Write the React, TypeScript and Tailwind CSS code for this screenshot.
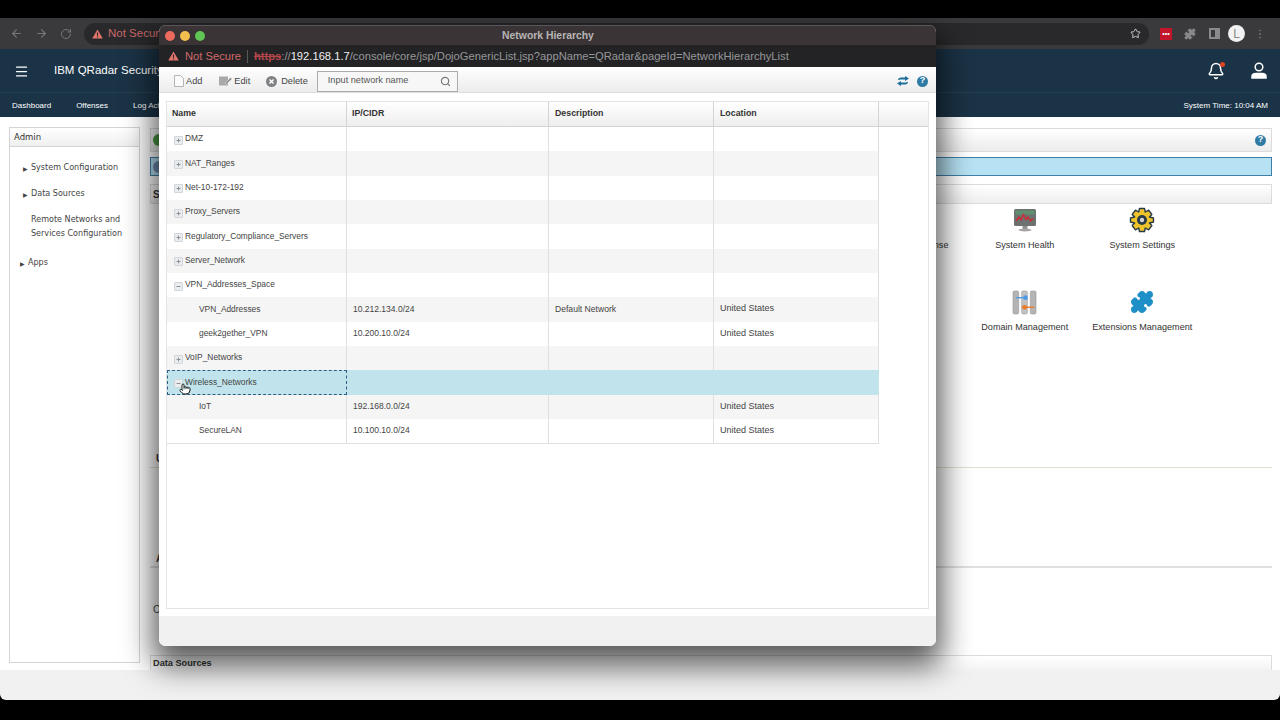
import React from 'react';
import { ArrowLeft, ArrowRight, RotateCw, Star, Puzzle, Menu, Bell, Search, Pointer, MoreVertical } from 'lucide-react';

interface NetRow {
  name: string;
  ip?: string;
  desc?: string;
  loc?: string;
  state?: 'plus' | 'minus';
  selected?: boolean;
}

const ROWS: NetRow[] = [
  { name: 'DMZ', state: 'plus' },
  { name: 'NAT_Ranges', state: 'plus' },
  { name: 'Net-10-172-192', state: 'plus' },
  { name: 'Proxy_Servers', state: 'plus' },
  { name: 'Regulatory_Compliance_Servers', state: 'plus' },
  { name: 'Server_Network', state: 'plus' },
  { name: 'VPN_Addresses_Space', state: 'minus' },
  { name: 'VPN_Addresses', ip: '10.212.134.0/24', desc: 'Default Network', loc: 'United States' },
  { name: 'geek2gether_VPN', ip: '10.200.10.0/24', loc: 'United States' },
  { name: 'VoIP_Networks', state: 'plus' },
  { name: 'Wireless_Networks', state: 'minus', selected: true },
  { name: 'IoT', ip: '192.168.0.0/24', loc: 'United States' },
  { name: 'SecureLAN', ip: '10.100.10.0/24', loc: 'United States' },
];

function Warning({ className }: { className: string }) {
  return (
    <svg viewBox="0 0 12 11" className={className}>
      <path d="M6 0.5 L11.8 10.5 H0.2 Z" fill="#e2746c" />
      <rect x="5.4" y="3.8" width="1.2" height="3.6" fill="#2a2729" />
      <rect x="5.4" y="8.1" width="1.2" height="1.2" fill="#2a2729" />
    </svg>
  );
}

function HelpDot({ className }: { className: string }) {
  return (
    <span className={`flex items-center justify-center rounded-full bg-[#2f7ba6] text-[9px] font-bold text-white ${className}`}>?</span>
  );
}

function Toggle({ state }: { state: 'plus' | 'minus' }) {
  return (
    <span className="mt-[2px] mr-[2px] flex h-[9px] w-[9px] shrink-0 items-center justify-center rounded-[1px] border border-[#d2d6da] bg-[#e9edf0]">
      <svg viewBox="0 0 7 7" className="h-[7px] w-[7px]">
        <rect x="1.5" y="3" width="4" height="1" fill="#8c9196" />
        {state === 'plus' && <rect x="3" y="1.5" width="1" height="4" fill="#8c9196" />}
      </svg>
    </span>
  );
}

function HealthIcon() {
  return (
    <svg viewBox="0 0 24 24" className="h-[24px] w-[24px]">
      <rect x="1" y="1" width="22" height="17" rx="1.5" fill="#6d716f" />
      <rect x="2.5" y="2.5" width="19" height="4" fill="#5e8f70" />
      <path d="M3 13 L6 9 L8 12 L10.5 6.5 L13 11.5 L15 9 L17.5 13 L20 10.5" fill="none" stroke="#d3262e" strokeWidth="1.3" />
      <rect x="9.5" y="18" width="5" height="3" fill="#8f8f8f" />
      <ellipse cx="12" cy="22" rx="6.5" ry="1.5" fill="#a5a5a5" />
    </svg>
  );
}

function GearIcon() {
  return (
    <svg viewBox="0 0 26 26" className="h-[26px] w-[26px]">
      <path
        d="M10.5 1.5 H15.5 L16.3 5 L19.6 3.2 L22.8 7.5 L20.4 10 L24.5 11 V15 L20.4 16 L22.8 18.5 L19.6 22.8 L16.3 21 L15.5 24.5 H10.5 L9.7 21 L6.4 22.8 L3.2 18.5 L5.6 16 L1.5 15 V11 L5.6 10 L3.2 7.5 L6.4 3.2 L9.7 5 Z"
        fill="#eec32b"
        stroke="#273a45"
        strokeWidth="1.4"
        strokeLinejoin="round"
      />
      <circle cx="13" cy="13" r="5" fill="#273a45" />
      <circle cx="13" cy="13" r="2.2" fill="#d5d5d5" />
    </svg>
  );
}

function DomainIcon() {
  return (
    <svg viewBox="0 0 26 26" className="h-[25px] w-[25px]">
      <rect x="1" y="1" width="6" height="24" rx="1.5" fill="#b4b4b4" stroke="#8b8b8b" strokeWidth="0.5" />
      <rect x="10" y="1" width="6" height="24" rx="1.5" fill="#c2c2c2" stroke="#8b8b8b" strokeWidth="0.5" />
      <rect x="19" y="1" width="6" height="24" rx="1.5" fill="#b4b4b4" stroke="#8b8b8b" strokeWidth="0.5" />
      <path d="M4 8 H12" stroke="#4f9be8" strokeWidth="1.5" />
      <circle cx="14" cy="8" r="2.5" fill="#4f9be8" />
      <path d="M14 18 H23" stroke="#ec7a26" strokeWidth="1.5" />
      <circle cx="13" cy="18" r="2.5" fill="#ec7a26" />
    </svg>
  );
}

function AdminTile({ label, icon }: { label: string; icon?: React.ReactNode }) {
  return (
    <div className="flex h-[82px] w-[117.5px] flex-col items-center">
      <div className="flex h-[26px] items-center">{icon}</div>
      <div className="mt-[6px] text-[9.1px] whitespace-nowrap text-[#333]">{label}</div>
    </div>
  );
}

function SideItem({ label, arrow = true }: { label: string; arrow?: boolean }) {
  return (
    <div className="flex h-[26px] items-center">
      <span className={`mr-[3px] w-[5px] text-[6px] text-[#444] ${arrow ? '' : 'invisible'}`}>▶</span>
      <span>{label}</span>
    </div>
  );
}

function Page() {
  return (
    <div className="flex h-full flex-col">
      {/* browser toolbar */}
      <div className="flex h-[31px] shrink-0 items-center bg-[#3a3a3c] pl-[10px] pr-[10px] text-[#77777a]">
        <ArrowLeft size={13} />
        <ArrowRight size={13} className="ml-[12px]" />
        <RotateCw size={12} className="ml-[12px]" />
        <div className="ml-[12px] flex h-[22px] w-[1065px] items-center rounded-full bg-[#29292b] pl-[8px] pr-[7px]">
          <Warning className="h-[10px] w-[11px]" />
          <span className="ml-[5px] text-[11.5px] text-[#c9686a]">Not Secure</span>
          <Star size={11} className="ml-auto mr-[1px] text-[#d5d5d5]" />
        </div>
        <span className="ml-[11px] flex h-[12px] w-[12px] items-center justify-center bg-[#c3152b] text-[7px] leading-none font-bold text-white">•••</span>
        <Puzzle size={12} className="ml-[12px] fill-[#8a8a8c] text-[#8a8a8c]" />
        <span className="ml-[13px] h-[11px] w-[11px] border-2 border-[#8a8a8c] border-r-[5px]" />
        <span className="ml-[8px] flex h-[17px] w-[17px] items-center justify-center rounded-full bg-[#f2f2f2] text-[12px] text-[#888]">L</span>
        <MoreVertical size={12} className="ml-[9px] text-[#77777a]" />
      </div>

      {/* qradar header */}
      <div className="flex h-[43px] shrink-0 items-center bg-[#1b3346] pt-[1px] pl-[14px] pr-[13px] text-white">
        <Menu size={15} />
        <span className="ml-[25px] text-[11.5px] whitespace-nowrap">IBM QRadar Security Intelligence</span>
        <span className="relative ml-auto">
          <Bell size={18} />
          <span className="absolute top-0 right-0 h-[5px] w-[5px] rounded-full bg-[#e0431f]" />
        </span>
        <svg viewBox="0 0 16 18" className="ml-[26px] h-[18px] w-[16px]" fill="none" stroke="#fff" strokeWidth="1.5">
          <circle cx="8" cy="5" r="3.8" />
          <path d="M1 16 V14.5 C1 12.5 3 11.5 5 11.5 H11 C13 11.5 15 12.5 15 14.5 V16 Z" fill="#fff" />
        </svg>
      </div>
      <div className="flex h-[25px] shrink-0 items-center border-t border-[#24404f] bg-[#1b3346] pt-[1px] pl-[12px] pr-[12px] text-[8px] text-white">
        <span>Dashboard</span>
        <span className="ml-[25px]">Offenses</span>
        <span className="ml-[25px]">Log Activity</span>
        <span className="ml-auto">System Time: 10:04 AM</span>
      </div>

      {/* admin page behind the popup */}
      <div className="flex min-h-0 flex-1 overflow-hidden bg-white pt-[10px] pl-[9px] pr-[8px]">
        <div className="h-[536px] w-[131px] shrink-0 border border-[#d4d4d4] font-['DejaVu_Sans',sans-serif] text-[8.05px] text-[#444]">
          <div className="flex h-[19px] items-center border-b border-[#d4d4d4] bg-gradient-to-b from-white to-[#efefef] pl-[4px] text-[8.5px] text-[#333]">Admin</div>
          <div className="pt-[8px] pl-[13px]">
            <SideItem label="System Configuration" />
            <SideItem label="Data Sources" />
            <div className="mt-[6px] ml-[8px] leading-[14px]">
              Remote Networks and
              <br />
              Services Configuration
            </div>
            <div className="mt-[9px] -ml-[3px]">
              <SideItem label="Apps" />
            </div>
          </div>
        </div>

        <div className="ml-[10px] flex min-w-0 flex-1 flex-col">
          <div className="mt-[1px] flex h-[24px] shrink-0 items-center justify-between border border-[#dcdcdc] bg-gradient-to-b from-white to-[#ececec] pl-[2px] pr-[5px]">
            <span className="h-[12px] w-[12px] rounded-full bg-[#4d9b45]" />
            <HelpDot className="h-[11px] w-[11px]" />
          </div>
          <div className="mt-[5px] flex h-[19px] shrink-0 items-center border border-[#3f7fa8] bg-[#b6e2f3] pl-[2px]">
            <span className="h-[12px] w-[12px] rounded-full bg-[#6f8fb0]" />
          </div>
          <div className="mt-[8px] flex h-[20px] shrink-0 items-center border border-[#dcdcdc] bg-gradient-to-b from-white to-[#eeeeee] pl-[2px] text-[10px] font-bold text-[#333]">
            S
          </div>
          <div className="mt-[3px] flex shrink-0 justify-end pr-[71px]">
            <div>
              <div className="flex">
                <AdminTile label="Deployment License" />
                <AdminTile label="System Health" icon={<HealthIcon />} />
                <AdminTile label="System Settings" icon={<GearIcon />} />
              </div>
              <div className="flex justify-end">
                <AdminTile label="Domain Management" icon={<DomainIcon />} />
                <AdminTile label="Extensions Management" icon={<Puzzle size={24} className="fill-[#1f8fc7] text-[#1f8fc7]" />} />
              </div>
            </div>
          </div>
          <div className="mt-[83px] h-[14px] shrink-0 border-b border-[#dfe2cc] pl-[6px] text-[10px] leading-none font-bold text-[#333]">U</div>
          <div className="mt-[86px] h-[14px] shrink-0 border-b-2 border-[#e0e0e0] pl-[6px] text-[10px] leading-none font-bold text-[#333]">A</div>
          <div className="mt-[37px] h-[11px] shrink-0 pl-[3px] text-[10px] leading-none text-[#444]">C</div>
          <div className="mt-[39px] flex h-[20px] shrink-0 items-center border border-[#dcdcdc] bg-gradient-to-b from-white to-[#f0f0f0] pb-[2px] pl-[2px] text-[9.2px] font-bold text-[#333]">
            Data Sources
          </div>
        </div>
      </div>

      <div className="h-[30px] shrink-0 rounded-b-[6px] bg-[#f1f1f1]" />
      <div className="h-[20px] shrink-0 bg-black" />
    </div>
  );
}

function NetworkWindow() {
  return (
    <div className="absolute top-[25px] left-[159px] z-10 flex h-[621px] w-[777px] flex-col overflow-hidden rounded-[7px] bg-white">
      <div className="relative flex h-[20px] shrink-0 items-center border-t border-[#5a5558] bg-[#3a3436] pl-[6px]">
        <span className="h-[10px] w-[10px] rounded-full bg-[#ed6a5e]" />
        <span className="ml-[5px] h-[10px] w-[10px] rounded-full bg-[#f4bf4f]" />
        <span className="ml-[5px] h-[10px] w-[10px] rounded-full bg-[#61c554]" />
        <span className="flex-1 pr-[45px] text-center text-[10.4px] font-bold text-[#b8b4b5]">Network Hierarchy</span>
      </div>
      <div className="flex h-[22px] shrink-0 items-center bg-[#232224] pl-[9px] text-[11.2px] text-[#96989a]">
        <Warning className="h-[10px] w-[11px]" />
        <span className="ml-[6px] text-[#d2696a]">Not Secure</span>
        <span className="mx-[6px] h-[13px] w-px bg-[#5a5a5a]" />
        <span className="font-bold text-[#b4474a] line-through">https</span>
        <span>://</span>
        <span className="text-[#f0f0f0]">192.168.1.7</span>
        <span>/console/core/jsp/DojoGenericList.jsp?appName=QRadar&amp;pageId=NetworkHierarchyList</span>
      </div>

      <div className="flex h-[26px] shrink-0 items-center border-b border-[#dedede] bg-gradient-to-b from-white to-[#ececec] pt-[3px] pl-[15px] pr-[8px] text-[9.2px] text-[#444]">
        <svg viewBox="0 0 10 12" className="h-[12px] w-[10px]">
          <path d="M0.5 0.5 H6.5 L9.5 3.5 V11.5 H0.5 Z" fill="#fafafa" stroke="#b5b5b5" />
        </svg>
        <span className="mt-[1px] ml-[2px]">Add</span>
        <svg viewBox="0 0 13 10" className="ml-[17px] h-[10px] w-[13px]">
          <rect x="0" y="0.5" width="9" height="9" fill="#a9a9a9" />
          <path d="M6 7 L11.5 1.5 L13 3 L7.5 8 Z" fill="#8c8c8c" stroke="#eee" strokeWidth="0.5" />
        </svg>
        <span className="mt-[1px] ml-[2px]">Edit</span>
        <svg viewBox="0 0 11 11" className="ml-[16px] h-[11px] w-[11px]">
          <circle cx="5.5" cy="5.5" r="5.5" fill="#7f8285" />
          <path d="M3.5 3.5 L7.5 7.5 M7.5 3.5 L3.5 7.5" stroke="#fff" strokeWidth="1.5" />
        </svg>
        <span className="mt-[1px] ml-[4px]">Delete</span>
        <div className="ml-[9px] flex h-[21px] w-[141px] items-center border border-[#ababab] bg-[#f7f7f7] pl-[10px] pr-[6px] text-[#555]">
          Input network name
          <Search size={11} strokeWidth={2.5} className="ml-auto text-[#777]" />
        </div>
        <svg viewBox="0 0 12 10" className="ml-auto h-[10px] w-[12px]">
          <path d="M1 4 C1 2 3 1.5 5 1.5 H8 V0 L12 2.5 L8 5 V3.5 H4 C3 3.5 1.5 4 1 4 Z" fill="#1d6f9c" />
          <path d="M11 6 C11 8 9 8.5 7 8.5 H4 V10 L0 7.5 L4 5 V6.5 H8 C9 6.5 10.5 6 11 6 Z" fill="#1d6f9c" />
        </svg>
        <HelpDot className="ml-[8px] h-[11px] w-[11px]" />
      </div>

      <div className="flex min-h-0 flex-1 flex-col px-[7px] pt-[8px] pb-[7px]">
        <div className="relative flex-1 border border-[#e4e4e4] text-[8.4px] text-[#444]">
          <div className="flex h-[25px] items-center border-b border-[#d4d4d4] bg-gradient-to-b from-white to-[#eeeeee] text-[8.8px] font-bold text-[#333]">
            <div className="flex h-full w-[180px] items-center border-r border-[#d4d4d4] pl-[5px]">Name</div>
            <div className="flex h-full w-[202px] items-center border-r border-[#d4d4d4] pl-[5px]">IP/CIDR</div>
            <div className="flex h-full w-[165px] items-center border-r border-[#d4d4d4] pl-[6px]">Description</div>
            <div className="flex h-full w-[165px] items-center border-r border-[#d4d4d4] pl-[6px]">Location</div>
          </div>
          <div className="w-[712px] border-b border-[#e0e0e0]">
            {ROWS.map((row, i) => (
              <div
                key={row.name}
                className={`flex h-[24.35px] ${row.selected ? 'bg-[#c1e4ec]' : i % 2 ? 'bg-[#f5f5f5]' : 'bg-white'}`}
              >
                <div
                  className={`flex w-[180px] items-center ${row.selected ? 'border border-dashed border-[#2b5f86] pl-[6px]' : 'border-r border-[#e0e0e0] pl-[7px]'}`}
                >
                  {row.state ? <Toggle state={row.state} /> : <span className="w-[25px] shrink-0" />}
                  <span className="-mt-[1px]">{row.name}</span>
                </div>
                <div className={`flex w-[202px] items-center pb-[1px] pl-[6px] text-[8.5px] ${row.selected ? '' : 'border-r border-[#e0e0e0]'}`}>{row.ip}</div>
                <div className={`flex w-[165px] items-center pb-[1px] pl-[6px] text-[8.6px] ${row.selected ? '' : 'border-r border-[#e0e0e0]'}`}>{row.desc}</div>
                <div className={`flex w-[165px] items-center pb-[1px] pl-[6px] text-[9px] ${row.selected ? '' : 'border-r border-[#e0e0e0]'}`}>{row.loc}</div>
              </div>
            ))}
          </div>
          <Pointer size={12} className="absolute top-[281px] left-[12px] fill-white text-[#222]" />
        </div>
      </div>
      <div className="h-[30px] shrink-0 bg-[#f1f1f1]" />
    </div>
  );
}

export default function App() {
  return (
    <div className="relative h-[720px] w-[1280px] overflow-hidden bg-black pt-[18px] font-['Liberation_Sans',Arial,sans-serif]">
      <Page />
      <div className="pointer-events-none absolute top-[25px] left-[159px] h-[621px] w-[777px] rounded-[7px] shadow-[0_14px_30px_6px_rgba(0,0,0,0.65)]" />
      <NetworkWindow />
    </div>
  );
}
